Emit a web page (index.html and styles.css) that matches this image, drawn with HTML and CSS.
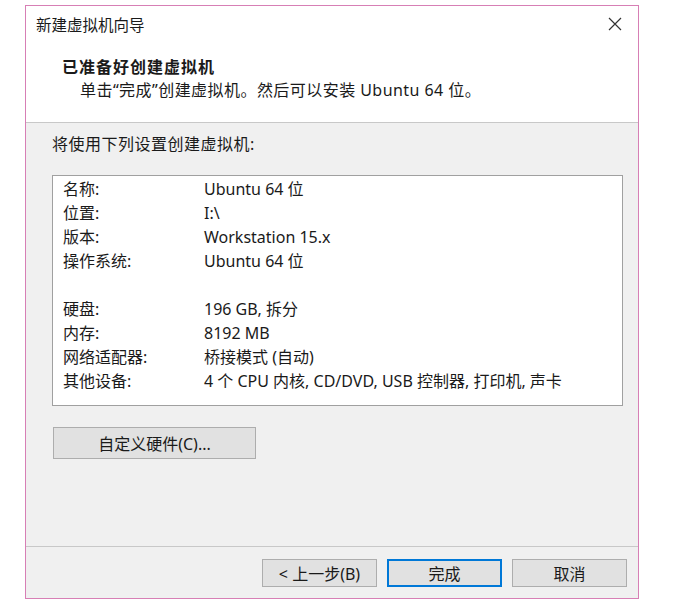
FILE: index.html
```html
<!DOCTYPE html>
<html lang="zh-CN">
<head>
<meta charset="utf-8">
<title>新建虚拟机向导</title>
<link rel="stylesheet" href="styles.css">
</head>
<body>
<div class="window">
  <div class="titlebar">
    <span class="title">新建虚拟机向导</span>
    <svg class="close" width="14" height="14" viewBox="0 0 14 14"><path d="M1 1L13 13M13 1L1 13" stroke="#333" stroke-width="1.2" fill="none"/></svg>
  </div>
  <div class="header">
    <div class="h-title">已准备好创建虚拟机</div>
    <div class="h-sub">单击“完成”创建虚拟机。然后可以安装 Ubuntu 64 位。</div>
  </div>
  <div class="body">
    <div class="intro">将使用下列设置创建虚拟机:</div>
    <div class="listbox">
      <div class="row"><span class="k">名称:</span><span class="v">Ubuntu 64 位</span></div>
      <div class="row"><span class="k">位置:</span><span class="v">I:\</span></div>
      <div class="row"><span class="k">版本:</span><span class="v">Workstation 15.x</span></div>
      <div class="row"><span class="k">操作系统:</span><span class="v">Ubuntu 64 位</span></div>
      <div class="row blank"></div>
      <div class="row"><span class="k">硬盘:</span><span class="v">196 GB, 拆分</span></div>
      <div class="row"><span class="k">内存:</span><span class="v">8192 MB</span></div>
      <div class="row"><span class="k">网络适配器:</span><span class="v">桥接模式 (自动)</span></div>
      <div class="row"><span class="k">其他设备:</span><span class="v">4 个 CPU 内核, CD/DVD, USB 控制器, 打印机, 声卡</span></div>
    </div>
    <button class="btn custom">自定义硬件(C)...</button>
  </div>
  <div class="footer">
    <button class="btn">&lt; 上一步(B)</button>
    <button class="btn primary">完成</button>
    <button class="btn">取消</button>
  </div>
</div>
</body>
</html>
```
FILE: styles.css
```css
html, body {
  margin: 0;
  padding: 0;
  background: #ffffff;
}
body {
  padding: 5px 0 0 25px;
  font-family: "Noto Sans", "Noto Sans CJK SC", sans-serif;
  font-size: 16px;
  color: #1a1a1a;
}
.window {
  width: 612px;
  height: 592px;
  border: 1px solid #d77fb5;
  background: #f0f0f0;
  display: flex;
  flex-direction: column;
  box-sizing: content-box;
}
.titlebar {
  background: #fff;
  height: 40px;
  display: flex;
  align-items: center;
  justify-content: space-between;
  padding: 0 16px 4px 10px;
  box-sizing: border-box;
}
.title {
  font-size: 15.5px;
}
.close {
  display: block;
}
.header {
  background: #fff;
  height: 77px;
  border-bottom: 1px solid #c8c8c8;
  padding-left: 36px;
  box-sizing: border-box;
}
.h-title {
  font-weight: bold;
  font-size: 16px;
  letter-spacing: 1px;
  line-height: 22px;
  margin-top: 10px;
}
.h-sub {
  padding-left: 18px;
  line-height: 22px;
  margin-top: 1px;
  letter-spacing: 0.45px;
}
.body {
  flex: 1;
  padding: 10px 15px 0 26px;
  border-bottom: 1px solid #c8c8c8;
}
.intro {
  line-height: 22px;
  letter-spacing: 0.5px;
}
.listbox {
  margin-top: 20px;
  height: 231px;
  box-sizing: border-box;
  background: #fff;
  border: 1px solid #a0a0a0;
  padding: 1px 10px 0;
}
.row {
  display: flex;
  height: 24px;
  line-height: 24px;
}
.k {
  width: 141px;
  flex: none;
}
.btn {
  font-family: inherit;
  font-size: 16px;
  color: #1a1a1a;
  background: #e1e1e1;
  border: 1px solid #adadad;
  padding: 0;
  margin: 0;
}
.custom {
  display: block;
  margin-top: 21px;
  margin-left: 1px;
  width: 203px;
  height: 32px;
}
.footer {
  height: 51px;
  display: flex;
  justify-content: flex-end;
  align-items: flex-start;
  gap: 10px;
  padding: 12px 11px 0 0;
  box-sizing: border-box;
}
.footer .btn {
  width: 115px;
  height: 28px;
}
.footer .primary {
  border: 2px solid #0078d7;
}
```
